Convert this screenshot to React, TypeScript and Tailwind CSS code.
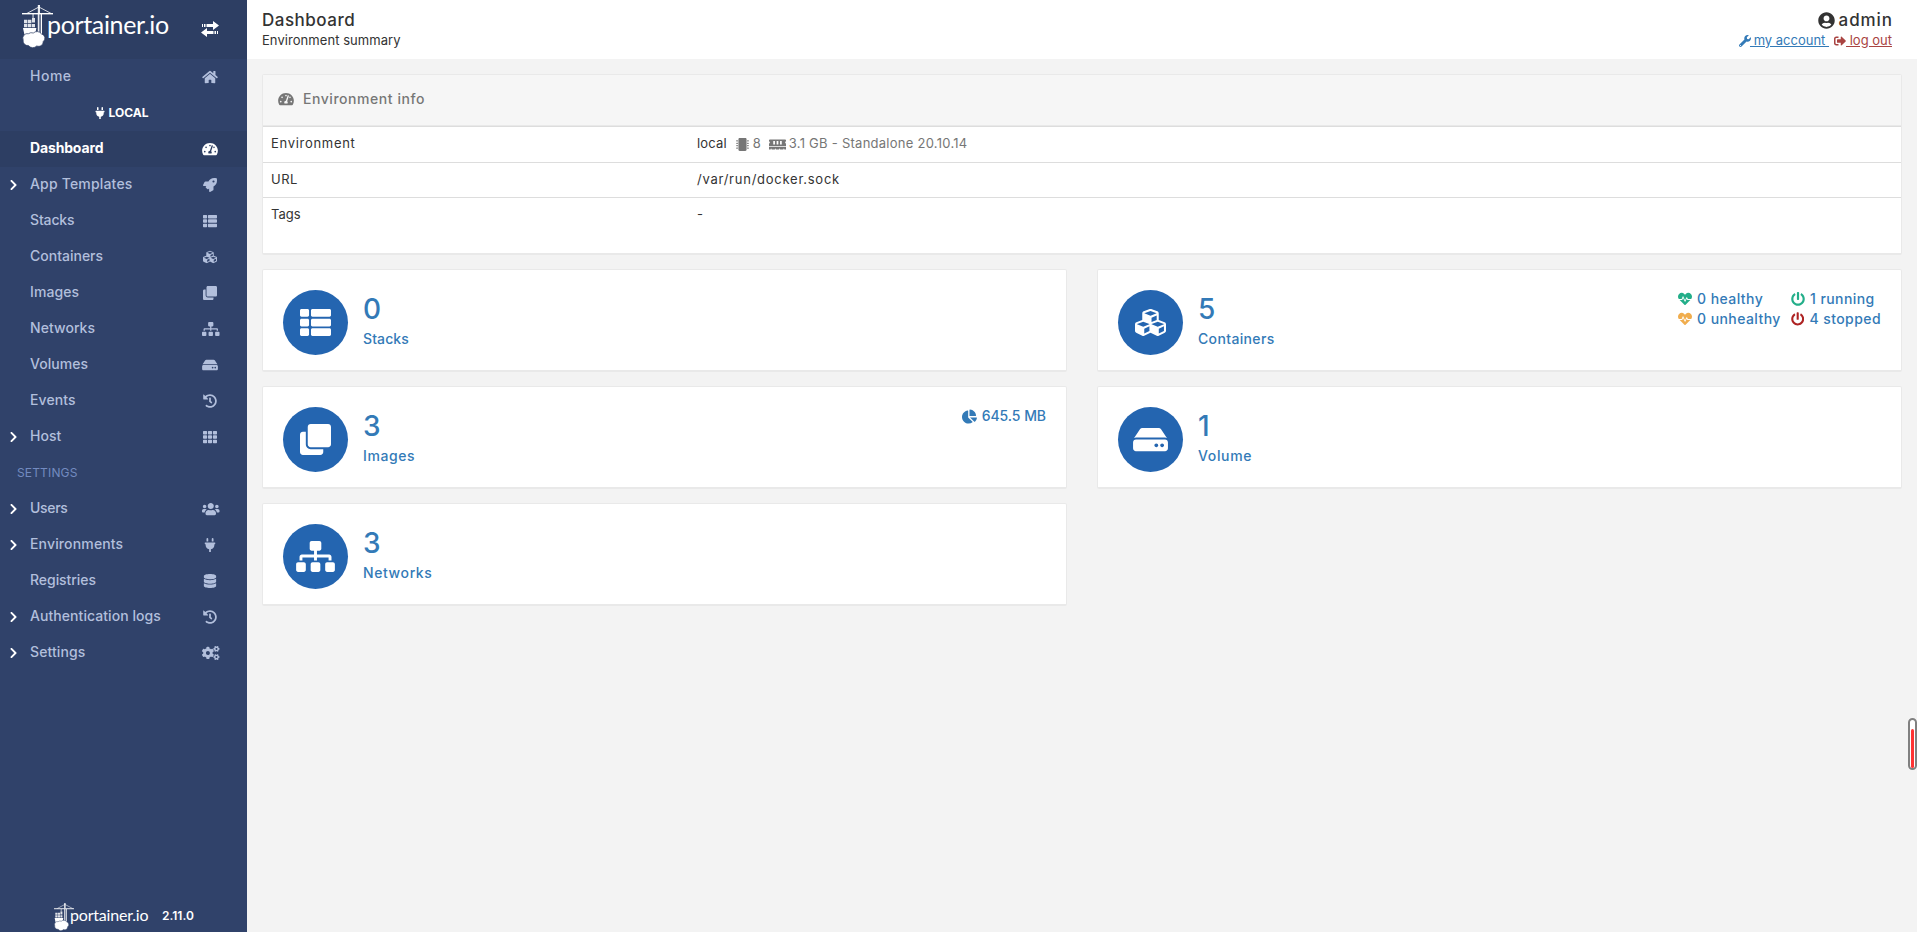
import React from 'react';
import type { IconType } from 'react-icons';
import {
    FaHome, FaPlug, FaTachometerAlt, FaRocket, FaThList, FaCubes, FaClone, FaSitemap, FaHdd, FaHistory,
    FaTh, FaUsers, FaDatabase, FaCogs, FaHeartbeat, FaPowerOff, FaChartPie, FaWrench, FaSignOutAlt,
    FaUserCircle, FaMicrochip, FaMemory, FaChevronRight
} from 'react-icons/fa';

type NavItem = {
    label: string;
    icon: IconType;
    iconWidth: string;
    track: string;
    active?: boolean;
    expandable?: boolean;
};

const WIDE = 'w-[17.5px] ml-[2px]';

const mainItems: NavItem[] = [
    { label: 'Dashboard', icon: FaTachometerAlt, iconWidth: 'w-4', track: 'tracking-[-0.15px]', active: true },
    { label: 'App Templates', icon: FaRocket, iconWidth: 'w-[14px]', track: 'tracking-[0.18px]', expandable: true },
    { label: 'Stacks', icon: FaThList, iconWidth: 'w-[14px]', track: 'tracking-[-0.15px]' },
    { label: 'Containers', icon: FaCubes, iconWidth: 'w-[14px]', track: 'tracking-[0]' },
    { label: 'Images', icon: FaClone, iconWidth: 'w-[14px]', track: 'tracking-[0.1px]' },
    { label: 'Networks', icon: FaSitemap, iconWidth: WIDE, track: 'tracking-[0.05px]' },
    { label: 'Volumes', icon: FaHdd, iconWidth: 'w-4', track: 'tracking-[0.05px]' },
    { label: 'Events', icon: FaHistory, iconWidth: 'w-[14px]', track: 'tracking-[0.1px]' },
    { label: 'Host', icon: FaTh, iconWidth: 'w-[14px]', track: 'tracking-[0]', expandable: true },
];

const settingsItems: NavItem[] = [
    { label: 'Users', icon: FaUsers, iconWidth: WIDE, track: 'tracking-[-0.3px]', expandable: true },
    { label: 'Environments', icon: FaPlug, iconWidth: 'w-[14px]', track: 'tracking-[0.15px]', expandable: true },
    { label: 'Registries', icon: FaDatabase, iconWidth: 'w-[14px]', track: 'tracking-[-0.05px]' },
    { label: 'Authentication logs', icon: FaHistory, iconWidth: 'w-[14px]', track: 'tracking-[0.06px]', expandable: true },
    { label: 'Settings', icon: FaCogs, iconWidth: WIDE, track: 'tracking-[0.1px]', expandable: true },
];

function CraneLogo({ className }: { className: string }) {
    return (
        <svg viewBox="0 0 31 43" className={className} fill="#fff">
            <path d="M0 8h31v1.4H0z" />
            <path d="M16.3 0h1.2v8h-1.2zM16.9 2 5 8.4M16.9 2 29 8.4" stroke="#fff" strokeWidth="0.8" />
            <path d="M15.8 9h1.1v20h-1.1zM17.6 9h.6v20h-.6zM18.9 9H20v20h-1.1zM10.600 9h.9v4h-.9z" />
            <path d="M10 13h3v4.500h-3zM2 14.800h3.400v3.400H2zM6 14.800h3.400v3.400H6zM2 18.900h3.400v3.400H2zM6 18.900h3.400v3.400H6zM10 18.900h3v3.400h-3z" opacity=".85" />
            <path d="M1 23h13.400l-1.400 7H2.500z" />
            <path d="M6.500 28.700a5 5 0 0 1 4.800-.7 5.500 5.500 0 0 1 8.200.9 4.400 4.400 0 0 1 1.600 7.800 4.400 4.400 0 0 1-6.300 4.200 5.500 5.500 0 0 1-8.400-.4A4.600 4.600 0 0 1 1.200 35a4.600 4.600 0 0 1 5.300-6.300z" stroke="#2d3e63" strokeWidth=".7" />
        </svg>
    );
}

function SidebarLink({ item }: { item: NavItem }) {
    const Icon = item.icon;
    return (
        <a className={`flex h-9 items-center ${item.active ? 'bg-[#2d3e63] text-white' : 'text-[#b2bfdc]'}`}>
            <span className="flex w-[30px] shrink-0 pl-2">
                {item.expandable && <FaChevronRight className="h-3 w-[11px] text-white" />}
            </span>
            <span className={`flex-1 pb-1 text-[14px] whitespace-nowrap ${item.active ? 'font-bold' : 'font-medium'} ${item.track}`}>
                {item.label}
            </span>
            <span className="mr-[29px] flex w-4 justify-center">
                <Icon className={`h-[14px] shrink-0 ${item.iconWidth}`} />
            </span>
        </a>
    );
}

function StatCard({ icon: Icon, iconWidth, value, label, track, children }: {
    icon: IconType; iconWidth: string; value: string; label: string; track: string; children?: React.ReactNode;
}) {
    return (
        <div className="flex h-[103px] items-start rounded-xs border border-b-2 border-[#e9e9e9] bg-white p-5 font-medium text-[#337ab7]">
            <div className="flex h-[65px] w-[65px] items-center justify-center rounded-full bg-[#2465b0] text-white">
                <Icon className={`h-[31px] ${iconWidth}`} />
            </div>
            <div className="ml-[15px] flex-1">
                <div className="mt-1 text-[28px] leading-[30px]">{value}</div>
                <div className={`mt-[5px] text-[14px] leading-5 ${track}`}>{label}</div>
            </div>
            {children}
        </div>
    );
}

export default function App() {
    return (
        <div className="relative flex h-[932px] w-full overflow-hidden bg-[#f3f3f3] font-['Inter',sans-serif] text-[#333]">
            {/* Sidebar */}
            <aside className="flex w-[247px] shrink-0 flex-col bg-[#30426a]">
                <div className="flex h-[59px] items-start bg-[#2d3e63] text-white">
                    <CraneLogo className="ml-[22px] mt-[5px] h-[43px] w-[31px]" />
                    <span className="-ml-[6px] mt-[7px] w-[154px] font-['Lato',sans-serif] text-[25px] leading-[34px] tracking-[-0.35px]">portainer.io</span>
                    <svg viewBox="0 0 18 16" className="mt-[21px] h-4 w-[18px]" fill="currentColor">
                        <path d="M1 3h1v3H1zM3 3h1.5v3H3zM5.5 3H12V0l6 4.5L12 9V6H5.5zM17 10h-1v3h1zM15 10h-1.5v3H15zM12.500 10H6V7l-6 4.500L6 16v-3h6.500z" />
                    </svg>
                </div>
                <nav>
                    <SidebarLink item={{ label: 'Home', icon: FaHome, iconWidth: 'w-4', track: 'tracking-[0.5px]' }} />
                    <div className="flex h-9 items-center justify-center gap-[3px] pr-[5px] text-[12px] font-bold text-white">
                        <FaPlug className="h-3 w-3" />
                        <span>LOCAL</span>
                    </div>
                    {mainItems.map((item) => <SidebarLink key={item.label} item={item} />)}
                    <div className="flex h-9 items-center pl-[17px] text-[12px] tracking-[0.15px] text-[#738bc0]">SETTINGS</div>
                    {settingsItems.map((item) => <SidebarLink key={item.label} item={item} />)}
                </nav>
                <div className="mt-auto flex h-[30px] items-start text-white">
                    <CraneLogo className="ml-[54px] mt-px h-[28px] w-5" />
                    <span className="-ml-1 mt-[3px] w-[92px] font-['Lato',sans-serif] text-[16px] leading-5 tracking-[-0.2px]">portainer.io</span>
                    <span className="mt-[5px] text-[12px] leading-[18px] font-semibold">2.11.0</span>
                </div>
            </aside>

            <main className="min-w-0 flex-1">
                {/* Header */}
                <header className="flex h-[59px] justify-between bg-white pr-[25px] pl-[15px]">
                    <div className="pt-[9px]">
                        <h1 className="text-[17px] leading-[22px] font-medium tracking-[0.5px]">Dashboard</h1>
                        <p className="text-[13px] leading-[19px] tracking-[0.06px]">Environment summary</p>
                    </div>
                    <div className="flex flex-col items-end pt-[9px]">
                        <div className="flex items-center gap-1 text-[17px] leading-[22px] font-medium">
                            <FaUserCircle className="h-[17px] w-[17px]" />
                            <span className="-mr-[0.9px] tracking-[0.9px]">admin</span>
                        </div>
                        <div className="flex items-center text-[13px] leading-[19px]">
                            <FaWrench className="-mr-px h-3 w-3 text-[#337ab7]" />
                            <a className="whitespace-pre text-[#337ab7] underline"> my account </a>
                            <FaSignOutAlt className="ml-[5px] h-3 w-3 text-[#a94442]" />
                            <a className="whitespace-pre text-[#a94442] underline"> log out</a>
                        </div>
                    </div>
                </header>

                <div className="px-[15px] pt-[15px]">
                    {/* Environment info */}
                    <section className="mb-[14px] h-[181px] rounded-xs border border-b-2 border-[#e9e9e9] bg-white">
                        <div className="flex h-[51px] items-center border-b border-[#e9e9e9] bg-[#f6f6f6] pb-[3px] pl-[15px] text-[14px] font-medium text-[#767676]">
                            <FaTachometerAlt className="mr-[9px] h-[14px] w-4" />
                            <span className="tracking-[0.55px]">Environment info</span>
                        </div>
                        <div className="flex h-9 items-center border-t border-[#ddd] pb-px pl-2 text-[13px]">
                            <span className="w-[426px] tracking-[0.7px]">Environment</span>
                            <span className="tracking-[0.15px]">local</span>
                            <span className="flex items-center text-[#767676]">
                                <FaMicrochip className="ml-[9px] mr-1 h-[13px] w-[13px]" />
                                <span>8</span>
                                <FaMemory className="ml-2 mr-[3px] h-[15px] w-[17px]" />
                                <span className="tracking-[0.26px]">3.1 GB - Standalone 20.10.14</span>
                            </span>
                        </div>
                        <div className="flex h-[35px] items-center border-t border-[#ddd] pl-2 text-[13px]">
                            <span className="w-[426px] tracking-[0.5px]">URL</span>
                            <span className="tracking-[0.75px]">/var/run/docker.sock</span>
                        </div>
                        <div className="flex h-[35px] items-center border-t border-[#ddd] pl-2 text-[13px]">
                            <span className="w-[426px]">Tags</span>
                            <span>-</span>
                        </div>
                    </section>

                    {/* Resource tiles */}
                    <div className="grid grid-cols-2 gap-x-[30px] gap-y-[14px]">
                        <StatCard icon={FaThList} iconWidth="w-[31px]" value="0" label="Stacks" track="tracking-[0.1px]" />
                        <StatCard icon={FaCubes} iconWidth="w-[31px]" value="5" label="Containers" track="tracking-[0.35px]">
                            <div className="-mt-px grid grid-cols-[113px_90px] text-[14px] leading-5 tracking-[0.43px] whitespace-nowrap">
                                <span className="flex items-center gap-[5px]"><FaHeartbeat className="h-[14px] w-[14px] text-[#23ae89]" />0 healthy</span>
                                <span className="flex items-center gap-[5px]"><FaPowerOff className="h-[14px] w-[14px] text-[#23ae89]" />1 running</span>
                                <span className="flex items-center gap-[5px]"><FaHeartbeat className="h-[14px] w-[14px] text-[#f0ad4e]" />0 unhealthy</span>
                                <span className="flex items-center gap-[5px]"><FaPowerOff className="h-[14px] w-[14px] text-[#ae2323]" />4 stopped</span>
                            </div>
                        </StatCard>
                        <StatCard icon={FaClone} iconWidth="w-[31px]" value="3" label="Images" track="tracking-[0.6px]">
                            <div className="-mt-px flex items-center gap-[5px] text-[14px] leading-5">
                                <FaChartPie className="h-[15px] w-[15px]" />
                                <span className="tracking-[-0.05px]">645.5 MB</span>
                            </div>
                        </StatCard>
                        <StatCard icon={FaHdd} iconWidth="w-[35px]" value="1" label="Volume" track="tracking-[0.65px]" />
                        <StatCard icon={FaSitemap} iconWidth="w-[39px]" value="3" label="Networks" track="tracking-[0.6px]" />
                    </div>
                </div>
            </main>

            {/* Side meter */}
            <div className="absolute top-[718px] right-0 flex h-[52px] w-[9px] items-end justify-center rounded-full border-2 border-[#808080] bg-white">
                <div className="h-[39px] w-[3px] rounded-full bg-[#ff3333]" />
            </div>
        </div>
    );
}
